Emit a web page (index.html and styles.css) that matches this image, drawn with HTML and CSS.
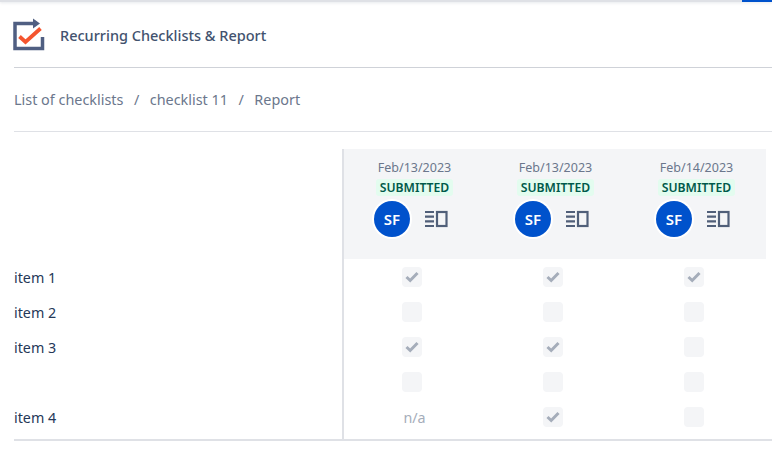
FILE: index.html
```html
<!DOCTYPE html>
<html lang="en">
<head>
<meta charset="utf-8">
<title>Recurring Checklists &amp; Report</title>
<link rel="stylesheet" href="styles.css">
</head>
<body>
<div class="topbar"><div class="topbar-accent"></div></div>
<main class="page">
  <header class="header">
    <svg class="logo" width="32" height="34" viewBox="0 0 32 34" aria-hidden="true">
      <path d="M20 6.500H2V31.500H29.500V20" fill="none" stroke="#505f82" stroke-width="3.500"/>
      <path d="M20 1.500L27 6.500L20 11.500Z" fill="#505f82"/>
      <path d="M6.500 19.500L12.500 25L27.500 11.500" fill="none" stroke="#f4552f" stroke-width="3.800"/>
    </svg>
    <h1 class="title">Recurring Checklists &amp; Report</h1>
  </header>
  <nav class="crumbs">
    <span>List of checklists</span><span class="sep">/</span><span>checklist 11</span><span class="sep">/</span><span>Report</span>
  </nav>
  <section class="report">
    <div class="labels">
      <div class="label-head"></div>
      <div class="label">item 1</div>
      <div class="label">item 2</div>
      <div class="label">item 3</div>
      <div class="label"></div>
      <div class="label">item 4</div>
    </div>
    <div class="data">
      <div class="col-heads">
        <div class="col-head">
          <div class="date">Feb/13/2023</div>
          <div class="lozenge">SUBMITTED</div>
          <div class="actions"><span class="avatar">SF</span>
            <svg class="detail" width="23" height="18" viewBox="0 0 23 18" aria-hidden="true"><path d="M0 2H9M0 6.700H9M0 11.300H9M0 16H9" stroke="#505f79" stroke-width="2.200"/><rect x="12" y="2" width="9.500" height="14" fill="none" stroke="#505f79" stroke-width="2.200"/></svg>
          </div>
        </div>
        <div class="col-head">
          <div class="date">Feb/13/2023</div>
          <div class="lozenge">SUBMITTED</div>
          <div class="actions"><span class="avatar">SF</span>
            <svg class="detail" width="23" height="18" viewBox="0 0 23 18" aria-hidden="true"><path d="M0 2H9M0 6.700H9M0 11.300H9M0 16H9" stroke="#505f79" stroke-width="2.200"/><rect x="12" y="2" width="9.500" height="14" fill="none" stroke="#505f79" stroke-width="2.200"/></svg>
          </div>
        </div>
        <div class="col-head">
          <div class="date">Feb/14/2023</div>
          <div class="lozenge">SUBMITTED</div>
          <div class="actions"><span class="avatar">SF</span>
            <svg class="detail" width="23" height="18" viewBox="0 0 23 18" aria-hidden="true"><path d="M0 2H9M0 6.700H9M0 11.300H9M0 16H9" stroke="#505f79" stroke-width="2.200"/><rect x="12" y="2" width="9.500" height="14" fill="none" stroke="#505f79" stroke-width="2.200"/></svg>
          </div>
        </div>
      </div>
      <div class="row">
        <div class="cell"><span class="box"><svg width="14" height="12" viewBox="0 0 14 12" aria-hidden="true"><path d="M1.500 6L5.200 9.500L12.500 2" fill="none" stroke="#a5adba" stroke-width="3"/></svg></span></div>
        <div class="cell"><span class="box"><svg width="14" height="12" viewBox="0 0 14 12" aria-hidden="true"><path d="M1.500 6L5.200 9.500L12.500 2" fill="none" stroke="#a5adba" stroke-width="3"/></svg></span></div>
        <div class="cell"><span class="box"><svg width="14" height="12" viewBox="0 0 14 12" aria-hidden="true"><path d="M1.500 6L5.200 9.500L12.500 2" fill="none" stroke="#a5adba" stroke-width="3"/></svg></span></div>
      </div>
      <div class="row">
        <div class="cell"><span class="box"></span></div>
        <div class="cell"><span class="box"></span></div>
        <div class="cell"><span class="box"></span></div>
      </div>
      <div class="row">
        <div class="cell"><span class="box"><svg width="14" height="12" viewBox="0 0 14 12" aria-hidden="true"><path d="M1.500 6L5.200 9.500L12.500 2" fill="none" stroke="#a5adba" stroke-width="3"/></svg></span></div>
        <div class="cell"><span class="box"><svg width="14" height="12" viewBox="0 0 14 12" aria-hidden="true"><path d="M1.500 6L5.200 9.500L12.500 2" fill="none" stroke="#a5adba" stroke-width="3"/></svg></span></div>
        <div class="cell"><span class="box"></span></div>
      </div>
      <div class="row">
        <div class="cell"><span class="box"></span></div>
        <div class="cell"><span class="box"></span></div>
        <div class="cell"><span class="box"></span></div>
      </div>
      <div class="row">
        <div class="cell na">n/a</div>
        <div class="cell"><span class="box"><svg width="14" height="12" viewBox="0 0 14 12" aria-hidden="true"><path d="M1.500 6L5.200 9.500L12.500 2" fill="none" stroke="#a5adba" stroke-width="3"/></svg></span></div>
        <div class="cell"><span class="box"></span></div>
      </div>
    </div>
  </section>
</main>
</body>
</html>
```
FILE: styles.css
```css
html, body {
  margin: 0;
  padding: 0;
  background: #fff;
}
body {
  font-family: "Noto Sans", sans-serif;
  color: #172b4d;
  height: 462px;
  overflow: hidden;
}
.topbar {
  height: 2px;
  background: #dfe1e6;
  box-shadow: 0 1px 3px rgba(9, 30, 66, 0.12);
  display: flex;
  justify-content: flex-end;
}
.topbar-accent {
  width: 30px;
  background: #0052cc;
}
.page {
  padding-left: 14px;
}
.header {
  height: 66px;
  box-sizing: border-box;
  border-bottom: 1px solid #cfd2d8;
  display: flex;
  align-items: flex-start;
  gap: 15px;
  padding-top: 15px;
}
.logo {
  margin-left: -1px;
  flex: none;
}
.title {
  margin: 0;
  padding-top: 8px;
  font-size: 14.500px;
  line-height: 20px;
  font-weight: 500;
  color: #42526e;
}
.crumbs {
  height: 64px;
  box-sizing: border-box;
  border-bottom: 1px solid #dfe1e6;
  display: flex;
  align-items: center;
  font-size: 14.400px;
  color: #6b778c;
}
.sep {
  margin: 0 10.500px;
}
.report {
  margin-top: 17px;
  display: flex;
  width: 758px;
  height: 292px;
  box-sizing: border-box;
  border-bottom: 2px solid #dfe1e6;
}
.labels {
  width: 328px;
  flex: none;
}
.label-head {
  height: 110.500px;
}
.label {
  height: 35.200px;
  display: flex;
  align-items: center;
  font-size: 14.300px;
  color: #253858;
}
.data {
  border-left: 2px solid #dfe1e6;
  width: 422px;
  flex: none;
}
.col-heads {
  height: 110px;
  margin-bottom: 0.500px;
  background: #f4f5f7;
  display: grid;
  grid-template-columns: repeat(3, 141px);
}
.col-head {
  display: flex;
  flex-direction: column;
  align-items: center;
  padding-top: 10px;
}
.date {
  font-size: 12.500px;
  line-height: 17px;
  color: #6b778c;
}
.lozenge {
  margin-top: 3px;
  height: 17px;
  padding: 0 4px;
  border-radius: 3px;
  background: #e3fcef;
  color: #00594a;
  font-size: 12.200px;
  font-weight: 600;
  line-height: 17px;
}
.actions {
  margin-top: 5px;
  display: flex;
  align-items: center;
  gap: 15px;
  margin-left: -7px;
}
.avatar {
  width: 36px;
  height: 36px;
  border-radius: 50%;
  background: #0052cc;
  box-shadow: 0 0 0 2px #fff;
  color: #fff;
  font-size: 15px;
  font-weight: 600;
  display: flex;
  align-items: center;
  justify-content: center;
}
.row {
  height: 35px;
  display: grid;
  grid-template-columns: repeat(3, 141px);
}
.cell {
  display: flex;
  align-items: center;
  justify-content: center;
}
.box {
  width: 20px;
  height: 20px;
  margin-right: 5px;
  border-radius: 4px;
  background: #f4f5f7;
  display: flex;
  align-items: center;
  justify-content: center;
}
.na {
  font-size: 14.300px;
  color: #a5adba;
}
```
